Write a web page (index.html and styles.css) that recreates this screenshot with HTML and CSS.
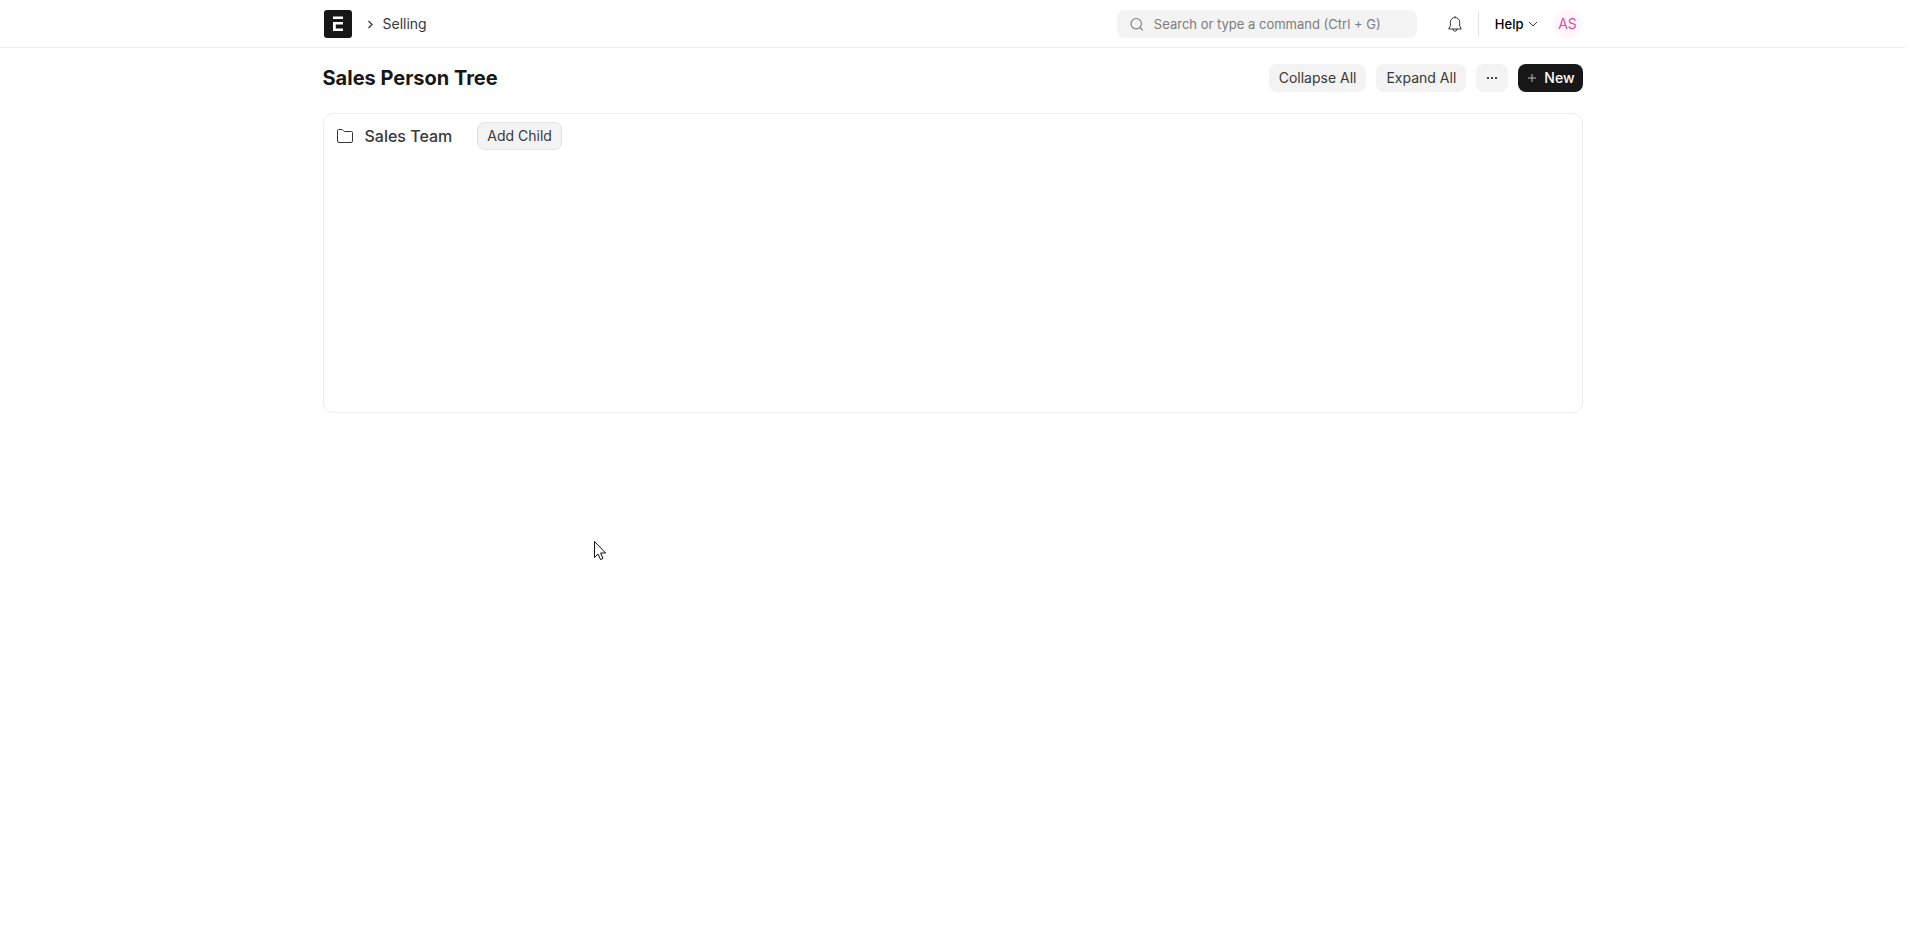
FILE: index.html
```html
<!DOCTYPE html>
<html lang="en">
<head>
<meta charset="utf-8">
<title>Sales Person Tree</title>
<link rel="stylesheet" href="styles.css">
</head>
<body>

<header class="navbar">
  <div class="container navbar-inner">
    <a class="navbar-brand" href="#" aria-label="Home">
      <svg class="app-logo" width="28" height="28" viewBox="0 0 28 28">
        <rect width="28" height="28" rx="3" fill="#171717"/>
        <path d="M9 6.600h10v2.400H9zM9 12h10v2.400h-7.200v4.100H19V21H9z" fill="#fff"/>
      </svg>
    </a>
    <nav class="breadcrumbs">
      <svg width="8" height="12" viewBox="0 0 8 12"><path d="M1.500 3L5 6.500 1.500 10" fill="none" stroke="#383838" stroke-width="1.300"/></svg>
      <a href="#">Selling</a>
    </nav>
    <div class="search-bar">
      <svg width="14" height="14" viewBox="0 0 14 14"><path d="M6.200 1.500a5.200 5.200 0 1 0 0 10.400a5.200 5.200 0 0 0 0-10.400zM10 10.500l2.800 2.800" fill="none" stroke="#7c7c7c" stroke-width="1.100"/></svg>
      <input type="text" placeholder="Search or type a command (Ctrl + G)" aria-label="Search">
    </div>
    <button class="icon-btn" type="button" aria-label="Notifications">
      <svg width="16" height="16" viewBox="0 0 16 16"><path d="M8 .500v1M3.300 6.200a4.700 4.700 0 0 1 9.400 0v3.800l1.600 3H1.700l1.600-3zM6 13.200a2 2 0 0 0 4 0" fill="none" stroke="#383838" stroke-linejoin="round" stroke-linecap="round"/></svg>
    </button>
    <span class="vertical-bar"></span>
    <button class="help-btn" type="button">Help
      <svg width="10" height="6" viewBox="0 0 10 6"><path d="M1 1l4 4 4-4" fill="none" stroke="#383838"/></svg>
    </button>
    <button class="avatar" type="button" aria-label="User menu">AS</button>
  </div>
</header>

<div class="container page-head">
  <h1 class="page-title">Sales Person Tree</h1>
  <div class="page-actions">
    <button class="btn" type="button">Collapse All</button>
    <button class="btn" type="button">Expand All</button>
    <button class="btn btn-menu" type="button" aria-label="Menu">
      <svg width="12" height="4" viewBox="0 0 12 4" fill="#383838"><rect x="1" y="1" width="2" height="2" rx=".5"/><rect x="5" y="1" width="2" height="2" rx=".5"/><rect x="9" y="1" width="2" height="2" rx=".5"/></svg>
    </button>
    <button class="btn btn-primary" type="button">
      <svg width="8" height="8" viewBox="0 0 8 8"><path d="M4 0v8M0 4h8" stroke="#bbb"/></svg>
      New
    </button>
  </div>
</div>

<main class="container">
  <div class="tree">
    <div class="tree-node">
      <a class="tree-link" href="#">
        <svg width="18" height="16" viewBox="0 0 18 16"><path d="M1.500 13V2.500a1 1 0 0 1 1-1h3.700l2 2h7.300a1 1 0 0 1 1 1V13a1.500 1.500 0 0 1-1.500 1.500H3A1.500 1.500 0 0 1 1.500 13z" fill="none" stroke="#383838"/></svg>
        Sales Team
      </a>
      <button class="btn btn-outline" type="button">Add Child</button>
    </div>
  </div>
</main>

<svg class="cursor" width="14" height="20" viewBox="0 0 14 20"><path d="M.5.500v16l3.500-3.500 2.500 5.500 2.500-1-2.400-5.500h5z" fill="#fff" stroke="#111"/></svg>

</body>
</html>
```
FILE: styles.css
```css
* {
  box-sizing: border-box;
}

body {
  margin: 0;
  padding-right: 15px;
  background: #fff;
  color: #383838;
  font-family: Inter, sans-serif;
  font-size: 14px;
  line-height: 20px;
}

a {
  color: inherit;
  text-decoration: none;
}

button, input {
  font: inherit;
  color: inherit;
  border: none;
  background: none;
  padding: 0;
}

.container {
  max-width: 1290px;
  margin: 0 auto;
  padding: 0 15px;
}

.navbar {
  border-bottom: 1px solid #ededed;
}

.navbar-inner {
  display: flex;
  align-items: center;
  height: 47px;
  padding-right: 16px;
}

.app-logo {
  display: block;
}

.navbar-brand {
  padding: 1px;
}

.breadcrumbs {
  display: flex;
  align-items: center;
  gap: 8px;
  margin-left: 14px;
}

.search-bar {
  display: flex;
  align-items: center;
  gap: 10px;
  width: 300px;
  height: 28px;
  margin-left: auto;
  padding: 0 13px;
  border-radius: 8px;
  background: #f3f3f3;
}

.search-bar input {
  flex: 1;
  min-width: 0;
  font-size: 13px;
}

.search-bar input::placeholder {
  color: #7c7c7c;
}

.icon-btn {
  display: flex;
  margin: 0 15px 0 30px;
}

.vertical-bar {
  width: 1px;
  height: 24px;
  background: #e2e2e2;
}

.help-btn {
  display: flex;
  align-items: center;
  gap: 4px;
  margin: 0 16px;
  color: #000;
  font-size: 13px;
  font-weight: 500;
}

.avatar {
  width: 28px;
  height: 28px;
  border-radius: 50%;
  background: #fff7fc;
  color: #e34aa6;
}

.page-head {
  display: flex;
  align-items: center;
  justify-content: space-between;
  height: 60px;
}

.page-title {
  margin: 0;
  color: #171717;
  font-size: 20px;
  font-weight: 700;
}

.page-actions {
  display: flex;
  gap: 10px;
}

.btn {
  display: flex;
  align-items: center;
  height: 28px;
  padding: 0 10px;
  border-radius: 8px;
  background: #f3f3f3;
}

.btn-primary {
  gap: 8px;
  padding: 0 8px 0 10px;
  background: #171717;
  color: #fff;
  font-weight: 500;
}

.btn-outline {
  padding: 0 9px;
  border: 1px solid #e2e2e2;
}

.tree {
  min-height: 300px;
  margin-top: 5px;
  padding: 8px 12px;
  border: 1px solid #ededed;
  border-radius: 10px;
}

.tree-node {
  display: flex;
  align-items: center;
  gap: 25px;
}

.tree-link {
  display: flex;
  align-items: center;
  gap: 11px;
  font-size: 16px;
  font-weight: 500;
}

.cursor {
  position: absolute;
  left: 594px;
  top: 541px;
}
```
